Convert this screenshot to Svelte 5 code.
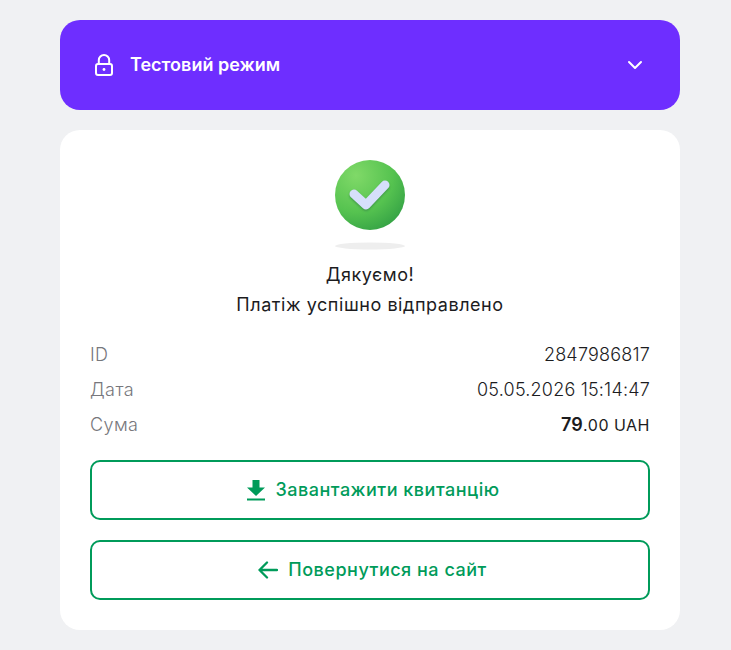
<script lang="ts">
  // Receipt rows
  const rows = [
    { label: 'ID', value: '2847986817' },
    { label: 'Дата', value: '05.05.2026 15:14:47' }
  ];
</script>

<main class="page">
  <header class="test-bar">
    <div class="test-title">
      <svg class="lock" viewBox="0 0 24 24" width="24" height="24" fill="none" stroke="currentColor" stroke-width="2" stroke-linecap="round" stroke-linejoin="round">
        <rect x="4" y="11" width="16" height="11" rx="2" />
        <path d="M6.800 11V7.200a5.200 5.200 0 0 1 10.400 0V11" />
        <circle cx="12" cy="16.500" r="1.400" fill="currentColor" stroke="none" />
      </svg>
      <span class="nudge">Тестовий режим</span>
    </div>
    <svg class="chevron" viewBox="0 0 16 10" width="16" height="10" fill="none" stroke="currentColor" stroke-width="2" stroke-linecap="round" stroke-linejoin="round">
      <path d="M2 2l6 6 6-6" />
    </svg>
  </header>

  <section class="card">
    <svg class="success" viewBox="0 0 70 90" width="70" height="90">
      <defs>
        <radialGradient id="ball" cx="0.3" cy="0.22" r="0.95">
          <stop offset="0" stop-color="#80d968" />
          <stop offset="0.55" stop-color="#56c350" />
          <stop offset="1" stop-color="#2c9a42" />
        </radialGradient>
        <filter id="soft" x="-30%" y="-30%" width="160%" height="160%">
          <feGaussianBlur stdDeviation="1.200" />
        </filter>
      </defs>
      <circle cx="35" cy="35" r="35" fill="url(#ball)" />
      <path d="M19 34l12 11 19-20" fill="none" stroke="#3f9a48" stroke-width="9" stroke-linecap="round" stroke-linejoin="round" filter="url(#soft)" transform="translate(0 1.500)" />
      <path d="M19 34l12 11 19-20" fill="none" stroke="#d6dffb" stroke-width="9" stroke-linecap="round" stroke-linejoin="round" />
      <ellipse cx="35" cy="86" rx="35" ry="3.400" fill="#eeeeee" />
    </svg>

    <p class="message">Дякуємо!<br />Платіж успішно відправлено</p>

    <dl class="details">
      {#each rows as row}
        <div class="row">
          <dt>{row.label}</dt>
          <dd>{row.value}</dd>
        </div>
      {/each}
      <div class="row">
        <dt>Сума</dt>
        <dd><b>79</b><span class="small">.00 UAH</span></dd>
      </div>
    </dl>

    <div class="actions">
      <button type="button" class="action">
        <svg viewBox="0 0 20 22" width="20" height="22" fill="currentColor">
          <path d="M6.500 1h7v7.500H19L10 17 1 8.500h5.500z" />
          <rect x="1" y="19.500" width="18" height="2" />
        </svg>
        <span class="nudge">Завантажити квитанцію</span>
      </button>
      <button type="button" class="action">
        <svg viewBox="0 0 20 18" width="20" height="18" fill="none" stroke="currentColor" stroke-width="2.300" stroke-linecap="round" stroke-linejoin="round">
          <path d="M19 9H1.500M9 1.500L1.500 9 9 16.500" />
        </svg>
        <span class="nudge">Повернутися на сайт</span>
      </button>
    </div>
  </section>
</main>

<style>
  :global(body) {
    background: #f0f1f3;
    font-family: "Inter", "Noto Sans", sans-serif;
  }

  .page {
    display: flex;
    flex-direction: column;
    gap: 20px;
    width: 620px;
    padding: 20px 0 20px 60px;
  }

  .test-bar {
    display: flex;
    align-items: center;
    justify-content: space-between;
    height: 90px;
    padding: 0 37px 0 32px;
    border-radius: 20px;
    background: #6e2eff;
    color: #fff;
  }

  .test-title {
    display: flex;
    align-items: center;
    gap: 14px;
    font-size: 18px;
    font-weight: 600;
  }

  .nudge {
    padding-bottom: 2px;
  }

  .card {
    display: flex;
    flex-direction: column;
    align-items: center;
    padding: 30px;
    border-radius: 20px;
    background: #fff;
  }

  .success {
    display: block;
  }

  .message {
    margin: 10px 0 0;
    font-size: 18px;
    line-height: 30px;
    text-align: center;
    color: #1c1c1e;
    letter-spacing: 0.55px;
  }

  .details {
    align-self: stretch;
    display: flex;
    flex-direction: column;
    gap: 5px;
    margin: 20px 0 0;
  }

  .row {
    display: flex;
    justify-content: space-between;
    font-size: 18px;
    line-height: 30px;
    font-weight: 300;
  }

  dt {
    color: #77777c;
    letter-spacing: 0.4px;
  }

  dd {
    margin: 0;
    color: #1c1c1e;
    letter-spacing: 0.2px;
  }

  dd b {
    font-weight: 600;
  }

  .small {
    font-size: 16px;
    font-weight: 400;
    letter-spacing: 0.5px;
  }

  .actions {
    align-self: stretch;
    display: flex;
    flex-direction: column;
    gap: 20px;
    margin-top: 20px;
  }

  .action {
    display: flex;
    align-items: center;
    justify-content: center;
    gap: 10px;
    height: 60px;
    padding: 0 0 0 5px;
    border: 2px solid #009b5a;
    border-radius: 10px;
    background: #fff;
    color: #009b5a;
    font: 500 18px "Inter", "Noto Sans", sans-serif;
    letter-spacing: 0.5px;
  }
</style>
